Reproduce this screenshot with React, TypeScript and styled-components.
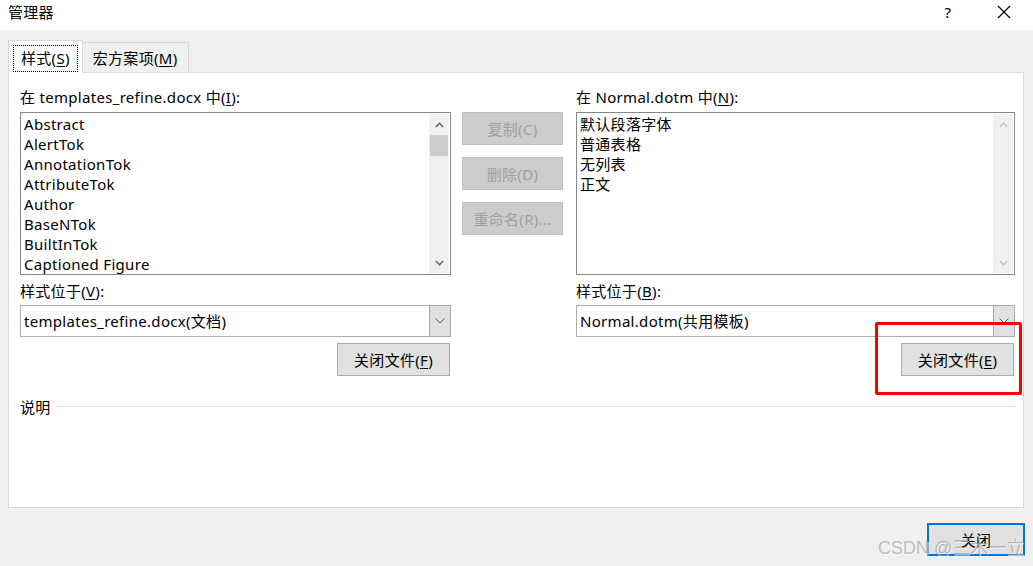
import React from 'react';
import styled, { createGlobalStyle } from 'styled-components';

const FONT = `"Noto Sans", "Noto Sans CJK SC", sans-serif`;

const GlobalStyle = createGlobalStyle`
  html, body {
    margin: 0;
    padding: 0;
    background: #f0f0f0;
  }
  body {
    font-family: ${FONT};
    font-size: 15px;
    letter-spacing: 0.3px;
    color: #000;
  }
`;

const Window = styled.div`
  position: relative;
  width: 1033px;
  height: 566px;
  background: #f0f0f0;
  display: flex;
  flex-direction: column;
  overflow: hidden;
`;

const TitleBar = styled.div`
  height: 30px;
  background: #fff;
  display: flex;
  align-items: flex-start;
  padding-left: 8px;
  box-sizing: border-box;
`;

const Title = styled.div`
  flex: 1;
  font-size: 15px;
  line-height: 20px;
  margin-top: 2px;
`;

const TitleButton = styled.div`
  width: 56px;
  height: 24px;
  display: flex;
  align-items: center;
  justify-content: center;
  font-size: 15px;
  line-height: 20px;
`;

const Body = styled.div`
  padding: 10px 9px 0 8px;
`;

const TabStrip = styled.div`
  display: flex;
  align-items: flex-end;
  height: 33px;
  position: relative;
  z-index: 1;
  margin-bottom: -1px;
`;

const Tab = styled.div<{ $active?: boolean }>`
  box-sizing: border-box;
  height: ${(p) => (p.$active ? '33px' : '31px')};
  padding: ${(p) => (p.$active ? '3px 4px 1px 4px' : '0 10px')};
  background: ${(p) => (p.$active ? '#fff' : '#f0f0f0')};
  border: 1px solid #d9d9d9;
  border-bottom: ${(p) => (p.$active ? 'none' : '1px solid #d9d9d9')};
  border-left: ${(p) => (p.$active ? '1px solid #d9d9d9' : 'none')};
  display: flex;
  align-items: center;
  line-height: 20px;
`;

const FocusRect = styled.div`
  border: 1px dotted #000;
  height: 27px;
  box-sizing: border-box;
  padding: 0 7px;
  display: flex;
  align-items: center;
`;

const U = styled.span`
  text-decoration: underline;
  text-underline-offset: 2px;
  text-decoration-thickness: 1px;
`;

const Panel = styled.div`
  width: 1016px;
  height: 436px;
  box-sizing: border-box;
  background: #fff;
  border: 1px solid #d9d9d9;
  padding: 14px 0 0 11px;
`;

const Columns = styled.div`
  display: flex;
  align-items: flex-start;
`;

const Column = styled.div<{ $width: number }>`
  width: ${(p) => p.$width}px;
  display: flex;
  flex-direction: column;
`;

const Label = styled.div<{ $top?: number; $gap?: number }>`
  height: 20px;
  line-height: 20px;
  margin-top: ${(p) => p.$top ?? 0}px;
  margin-bottom: ${(p) => p.$gap ?? 5}px;
  white-space: nowrap;
`;

const ListBox = styled.div`
  height: 163px;
  box-sizing: border-box;
  border: 1px solid #828790;
  background: #fff;
  display: flex;
  padding: 1px 1px 0 0;
`;

const ListItems = styled.div`
  flex: 1;
  padding-left: 3px;
  overflow: hidden;
`;

const ListItem = styled.div`
  height: 20px;
  line-height: 20px;
  white-space: nowrap;
`;

const ScrollBar = styled.div`
  width: 20px;
  margin-bottom: 1px;
  background: #f0f0f0;
  display: flex;
  flex-direction: column;
`;

const ScrollArrow = styled.div`
  height: 21px;
  display: flex;
  align-items: center;
  justify-content: center;
`;

const ScrollTrack = styled.div`
  flex: 1;
  display: flex;
  flex-direction: column;
`;

const Thumb = styled.div`
  height: 21px;
  margin: 0 1px;
  background: #cdcdcd;
`;

const Combo = styled.div`
  height: 32px;
  box-sizing: border-box;
  border: 1px solid #adadad;
  background: #fff;
  display: flex;
`;

const ComboText = styled.div`
  flex: 1;
  padding-left: 3px;
  line-height: 30px;
  white-space: nowrap;
`;

const ComboButton = styled.div`
  width: 20px;
  border: 1px solid #a8a8a8;
  margin: -1px -1px -1px 0;
  background: #e1e1e1;
  display: flex;
  align-items: center;
  justify-content: center;
`;

const Button = styled.div<{ $width: number; $disabled?: boolean }>`
  width: ${(p) => p.$width}px;
  height: 33px;
  box-sizing: border-box;
  border: 1px solid ${(p) => (p.$disabled ? '#bfbfbf' : '#adadad')};
  background: ${(p) => (p.$disabled ? '#cccccc' : '#e1e1e1')};
  color: ${(p) => (p.$disabled ? '#a0a0a0' : '#000')};
  display: flex;
  align-items: center;
  justify-content: center;
  white-space: nowrap;
`;

const RightButtonRow = styled.div`
  display: flex;
  justify-content: flex-end;
  padding-right: 1px;
  margin-top: 6px;
`;

const MidColumn = styled.div`
  width: 125px;
  padding: 25px 0 0 11px;
  box-sizing: border-box;
  display: flex;
  flex-direction: column;
  gap: 12px;
`;

const Description = styled.div`
  display: flex;
  align-items: center;
  gap: 6px;
  margin-top: 21px;
  width: 995px;
  line-height: 20px;
`;

const Rule = styled.div`
  flex: 1;
  height: 1px;
  background: #dcdcdc;
  margin-top: -2px;
`;

const Footer = styled.div`
  display: flex;
  justify-content: flex-end;
  padding: 15px 8px 0 0;
`;

const DefaultButton = styled.div`
  width: 98px;
  height: 33px;
  box-sizing: border-box;
  border: 2px solid #0078d7;
  background: #e1e1e1;
  display: flex;
  align-items: center;
  justify-content: center;
`;

const Highlight = styled.div`
  position: absolute;
  left: 875px;
  top: 322px;
  width: 147px;
  height: 73px;
  box-sizing: border-box;
  border: 3px solid #ff0000;
  border-radius: 2px;
  pointer-events: none;
`;

const Watermark = styled.div`
  position: absolute;
  left: 878px;
  top: 537px;
  font-family: "Liberation Sans", "Noto Sans CJK SC", sans-serif;
  font-size: 18px;
  letter-spacing: 0;
  line-height: 22px;
  color: rgba(140, 140, 140, 0.55);
  text-shadow: 1px 1px 0 rgba(255, 255, 255, 0.6);
  white-space: nowrap;
  pointer-events: none;
`;

const Chevron: React.FC<{ dir: 'up' | 'down'; color: string }> = ({ dir, color }) => (
  <svg width={9} height={6} viewBox="0 0 9 6">
    <path
      d={dir === 'up' ? 'M0.8 5 L4.5 1.3 L8.2 5' : 'M0.8 1 L4.5 4.7 L8.2 1'}
      fill="none"
      stroke={color}
      strokeWidth={1.4}
    />
  </svg>
);

const ThinChevron: React.FC = () => (
  <svg width={10} height={6} viewBox="0 0 10 6">
    <path d="M0.5 0.5 L5 5 L9.5 0.5" fill="none" stroke="#555" strokeWidth={1} />
  </svg>
);

const leftItems = [
  'Abstract',
  'AlertTok',
  'AnnotationTok',
  'AttributeTok',
  'Author',
  'BaseNTok',
  'BuiltInTok',
  'Captioned Figure',
];

const rightItems = ['默认段落字体', '普通表格', '无列表', '正文'];

const App: React.FC = () => {
  return (
    <Window>
      <GlobalStyle />
      <TitleBar>
        <Title>管理器</Title>
        <TitleButton>?</TitleButton>
        <TitleButton style={{ marginRight: 1 }}>
          <svg width={14} height={14} viewBox="0 0 14 14">
            <path d="M1 1 L13 13 M13 1 L1 13" stroke="#000" strokeWidth={1.1} />
          </svg>
        </TitleButton>
      </TitleBar>

      <Body>
        <TabStrip>
          <Tab $active>
            <FocusRect>
              样式(<U>S</U>)
            </FocusRect>
          </Tab>
          <Tab>
            宏方案项(<U>M</U>)
          </Tab>
        </TabStrip>

        <Panel>
          <Columns>
            <Column $width={431}>
              <Label>
                在 templates_refine.docx 中(<U>I</U>):
              </Label>
              <ListBox>
                <ListItems>
                  {leftItems.map((item) => (
                    <ListItem key={item}>{item}</ListItem>
                  ))}
                </ListItems>
                <ScrollBar>
                  <ScrollArrow>
                    <Chevron dir="up" color="#606060" />
                  </ScrollArrow>
                  <ScrollTrack>
                    <Thumb />
                  </ScrollTrack>
                  <ScrollArrow>
                    <Chevron dir="down" color="#606060" />
                  </ScrollArrow>
                </ScrollBar>
              </ListBox>
              <Label $top={6} $gap={4}>
                样式位于(<U>V</U>):
              </Label>
              <Combo>
                <ComboText>templates_refine.docx(文档)</ComboText>
                <ComboButton>
                  <ThinChevron />
                </ComboButton>
              </Combo>
              <RightButtonRow>
                <Button $width={113}>
                  关闭文件(<U>F</U>)
                </Button>
              </RightButtonRow>
            </Column>

            <MidColumn>
              <Button $width={101} $disabled>
                复制(C)
              </Button>
              <Button $width={101} $disabled>
                删除(D)
              </Button>
              <Button $width={101} $disabled>
                重命名(R)...
              </Button>
            </MidColumn>

            <Column $width={439}>
              <Label>
                在 Normal.dotm 中(<U>N</U>):
              </Label>
              <ListBox>
                <ListItems>
                  {rightItems.map((item) => (
                    <ListItem key={item}>{item}</ListItem>
                  ))}
                </ListItems>
                <ScrollBar>
                  <ScrollArrow>
                    <Chevron dir="up" color="#c0c0c0" />
                  </ScrollArrow>
                  <ScrollTrack />
                  <ScrollArrow>
                    <Chevron dir="down" color="#c0c0c0" />
                  </ScrollArrow>
                </ScrollBar>
              </ListBox>
              <Label $top={6} $gap={4}>
                样式位于(<U>B</U>):
              </Label>
              <Combo>
                <ComboText>Normal.dotm(共用模板)</ComboText>
                <ComboButton>
                  <ThinChevron />
                </ComboButton>
              </Combo>
              <RightButtonRow>
                <Button $width={113}>
                  关闭文件(<U>E</U>)
                </Button>
              </RightButtonRow>
            </Column>
          </Columns>

          <Description>
            说明
            <Rule />
          </Description>
        </Panel>
      </Body>

      <Footer>
        <DefaultButton>关闭</DefaultButton>
      </Footer>

      <Highlight />
      <Watermark>CSDN @三木一立</Watermark>
    </Window>
  );
};

export default App;
